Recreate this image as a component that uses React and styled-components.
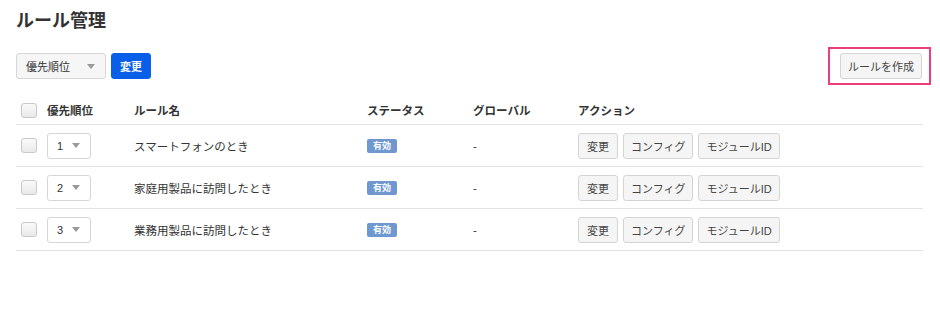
import React from "react";
import styled, { createGlobalStyle } from "styled-components";

const GlobalStyle = createGlobalStyle`
  body {
    margin: 0;
    background: #fff;
    font-family: "Liberation Sans", Arial, "Noto Sans CJK JP", sans-serif;
    color: #333;
  }
`;

const Page = styled.main`
  padding: 9px 17px 0 16px;
`;

const Title = styled.h1`
  margin: 0;
  font-size: 18px;
  font-weight: bold;
  line-height: 25px;
  color: #333;
`;

const Toolbar = styled.div`
  display: flex;
  align-items: center;
  justify-content: space-between;
  margin-top: 13px;
`;

const Group = styled.div`
  display: flex;
  align-items: center;
  gap: 5px;
`;

const SelectBox = styled.div`
  display: flex;
  align-items: center;
  justify-content: space-between;
  box-sizing: border-box;
  width: ${(p) => p.$width}px;
  height: 26px;
  padding: 0 10px 0 9px;
  border: 1px solid #d6d6d6;
  border-radius: 3px;
  background: ${(p) => (p.$small ? "#fff" : "#f6f6f6")};
  font-size: 11px;
  color: #333;
`;

const Caret = styled.span`
  width: 0;
  height: 0;
  border-left: 4px solid transparent;
  border-right: 4px solid transparent;
  border-top: 5px solid #999;
`;

const Button = styled.button`
  box-sizing: border-box;
  height: 26px;
  padding: 0 ${(p) => p.$pad || 8}px;
  border: 1px solid ${(p) => (p.$primary ? "#0a5fe8" : "#d4d4d4")};
  border-radius: 3px;
  background: ${(p) => (p.$primary ? "#0a5fe8" : "#f5f5f5")};
  color: ${(p) => (p.$primary ? "#fff" : "#444")};
  font-family: inherit;
  font-size: 11px;
  font-weight: ${(p) => (p.$primary ? "bold" : "normal")};
  white-space: nowrap;
`;

const Highlight = styled.div`
  display: flex;
  padding: 4px 7px 4px 10px;
  border: 2px solid #ec3f77;
  margin-right: -8px;
`;

const Table = styled.div`
  margin-top: 11px;
`;

const Row = styled.div`
  display: grid;
  grid-template-columns: 26px 87px 233px 106px 105px 1fr;
  align-items: center;
  height: ${(p) => (p.$head ? 28 : 41)}px;
  padding-left: 5px;
  border-bottom: 1px solid #e3e3e3;
  font-size: 11.5px;
  font-weight: ${(p) => (p.$head ? "bold" : "normal")};
  color: #333;
`;

const Check = styled.span`
  box-sizing: border-box;
  width: 16px;
  height: 15px;
  border: 1px solid #c8c8c8;
  border-radius: 3px;
  background: linear-gradient(#fafafa, #e9e9e9);
`;

const Badge = styled.span`
  justify-self: start;
  padding: 1px 6px;
  border-radius: 2px;
  background: #6f98d0;
  color: #fff;
  font-size: 9px;
  font-weight: bold;
  line-height: 12px;
`;

const Actions = styled.div`
  display: flex;
  gap: 5px;
`;

const rules = [
  { id: 1, name: "スマートフォンのとき" },
  { id: 2, name: "家庭用製品に訪問したとき" },
  { id: 3, name: "業務用製品に訪問したとき" }
];

export default function App() {
  return (
    <>
      <GlobalStyle />
      <Page>
        <Title>ルール管理</Title>
        <Toolbar>
          <Group>
            <SelectBox $width={90}>
              優先順位 <Caret />
            </SelectBox>
            <Button $primary $pad={8}>変更</Button>
          </Group>
          <Highlight>
            <Button $pad={7}>ルールを作成</Button>
          </Highlight>
        </Toolbar>
        <Table>
          <Row $head>
            <Check />
            <span>優先順位</span>
            <span>ルール名</span>
            <span>ステータス</span>
            <span>グローバル</span>
            <span>アクション</span>
          </Row>
          {rules.map((r) => (
            <Row key={r.id}>
              <Check />
              <SelectBox $width={44} $small>
                {r.id} <Caret />
              </SelectBox>
              <span>{r.name}</span>
              <Badge>有効</Badge>
              <span>-</span>
              <Actions>
                <Button $pad={8}>変更</Button>
                <Button $pad={7}>コンフィグ</Button>
                <Button $pad={7}>モジュールID</Button>
              </Actions>
            </Row>
          ))}
        </Table>
      </Page>
    </>
  );
}
